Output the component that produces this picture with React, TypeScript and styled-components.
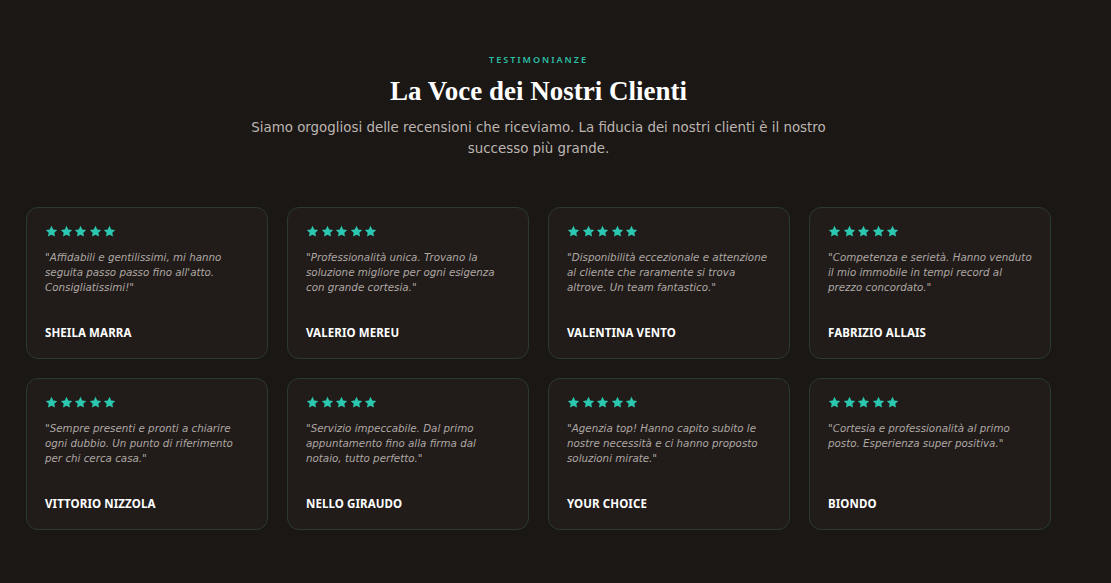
import React from "react";
import styled, { createGlobalStyle } from "styled-components";

const GlobalStyle = createGlobalStyle`
	html, body {
		margin: 0;
		padding: 0;
		background: #1b1715;
	}
	body {
		font-family: "Noto Sans", "Open Sans", sans-serif;
		-webkit-font-smoothing: antialiased;
	}
`;

const Section = styled.section`
	width: 1077px;
	min-height: 583px;
	box-sizing: border-box;
	padding: 54px 26px 0;
	background: #1b1715;
`;

const Header = styled.header`
	display: flex;
	flex-direction: column;
	align-items: center;
	text-align: center;
	margin-bottom: 48px;
`;

const Eyebrow = styled.span`
	font-size: 9px;
	font-weight: 600;
	letter-spacing: 2px;
	color: #2bbfa4;
	text-transform: uppercase;
	line-height: 12px;
`;

const Title = styled.h2`
	margin: 8px 0 0;
	font-family: "Liberation Serif", "Times New Roman", serif;
	font-size: 27px;
	font-weight: 700;
	color: #ffffff;
	line-height: 34px;
`;

const Subtitle = styled.p`
	margin: 9px 0 0;
	max-width: 600px;
	font-family: "DejaVu Sans", "Noto Sans", sans-serif;
	font-size: 13.4px;
	font-weight: 400;
	line-height: 21px;
	color: #bdb6b1;
`;

const Grid = styled.div`
	display: grid;
	grid-template-columns: repeat(4, 1fr);
	gap: 19px;
`;

const Card = styled.article`
	height: 152px;
	box-sizing: border-box;
	padding: 16px 18px 18px;
	border-radius: 12px;
	border: 1px solid #2a3a33;
	background: #211c1a;
	display: flex;
	flex-direction: column;
`;

const Stars = styled.div`
	display: flex;
	gap: 1.5px;
	height: 15px;
	align-items: center;
`;

const Quote = styled.p`
	margin: 11px 0 0;
	font-family: "DejaVu Sans", "Noto Sans", sans-serif;
	font-size: 10.3px;
	font-style: italic;
	font-weight: 300;
	line-height: 15px;
	color: #aea7a3;
	flex: 1;
`;

const Name = styled.h3`
	margin: 0;
	font-size: 11.5px;
	font-weight: 700;
	color: #ffffff;
	text-transform: uppercase;
	line-height: 14px;
	letter-spacing: 0.1px;
`;

const Star = () => (
	<svg width="13" height="13" viewBox="0 0 24 24" fill="#2cc7b0">
		<path d="M12 1.5l3.2 6.6 7.3 1-5.3 5.1 1.3 7.2L12 18l-6.5 3.4 1.3-7.2-5.3-5.1 7.3-1z" />
	</svg>
);

const reviews = [
	{ text: "\"Affidabili e gentilissimi, mi hanno seguita passo passo fino all'atto. Consigliatissimi!\"", name: "Sheila Marra" },
	{ text: "\"Professionalità unica. Trovano la soluzione migliore per ogni esigenza con grande cortesia.\"", name: "Valerio Mereu" },
	{ text: "\"Disponibilità eccezionale e attenzione al cliente che raramente si trova altrove. Un team fantastico.\"", name: "Valentina Vento" },
	{ text: "\"Competenza e serietà. Hanno venduto il mio immobile in tempi record al prezzo concordato.\"", name: "Fabrizio Allais" },
	{ text: "\"Sempre presenti e pronti a chiarire ogni dubbio. Un punto di riferimento per chi cerca casa.\"", name: "Vittorio Nizzola" },
	{ text: "\"Servizio impeccabile. Dal primo appuntamento fino alla firma dal notaio, tutto perfetto.\"", name: "Nello Giraudo" },
	{ text: "\"Agenzia top! Hanno capito subito le nostre necessità e ci hanno proposto soluzioni mirate.\"", name: "Your Choice" },
	{ text: "\"Cortesia e professionalità al primo posto. Esperienza super positiva.\"", name: "Biondo" },
];

const App: React.FC = () => {
	return (
		<>
			<GlobalStyle />
			<Section>
				<Header>
					<Eyebrow>Testimonianze</Eyebrow>
					<Title>La Voce dei Nostri Clienti</Title>
					<Subtitle>
						Siamo orgogliosi delle recensioni che riceviamo. La fiducia dei nostri clienti è il nostro successo più grande.
					</Subtitle>
				</Header>
				<Grid>
					{reviews.map((r) => (
						<Card key={r.name}>
							<Stars>
								{[0, 1, 2, 3, 4].map((i) => (
									<Star key={i} />
								))}
							</Stars>
							<Quote>{r.text}</Quote>
							<Name>{r.name}</Name>
						</Card>
					))}
				</Grid>
			</Section>
		</>
	);
};

export default App;
